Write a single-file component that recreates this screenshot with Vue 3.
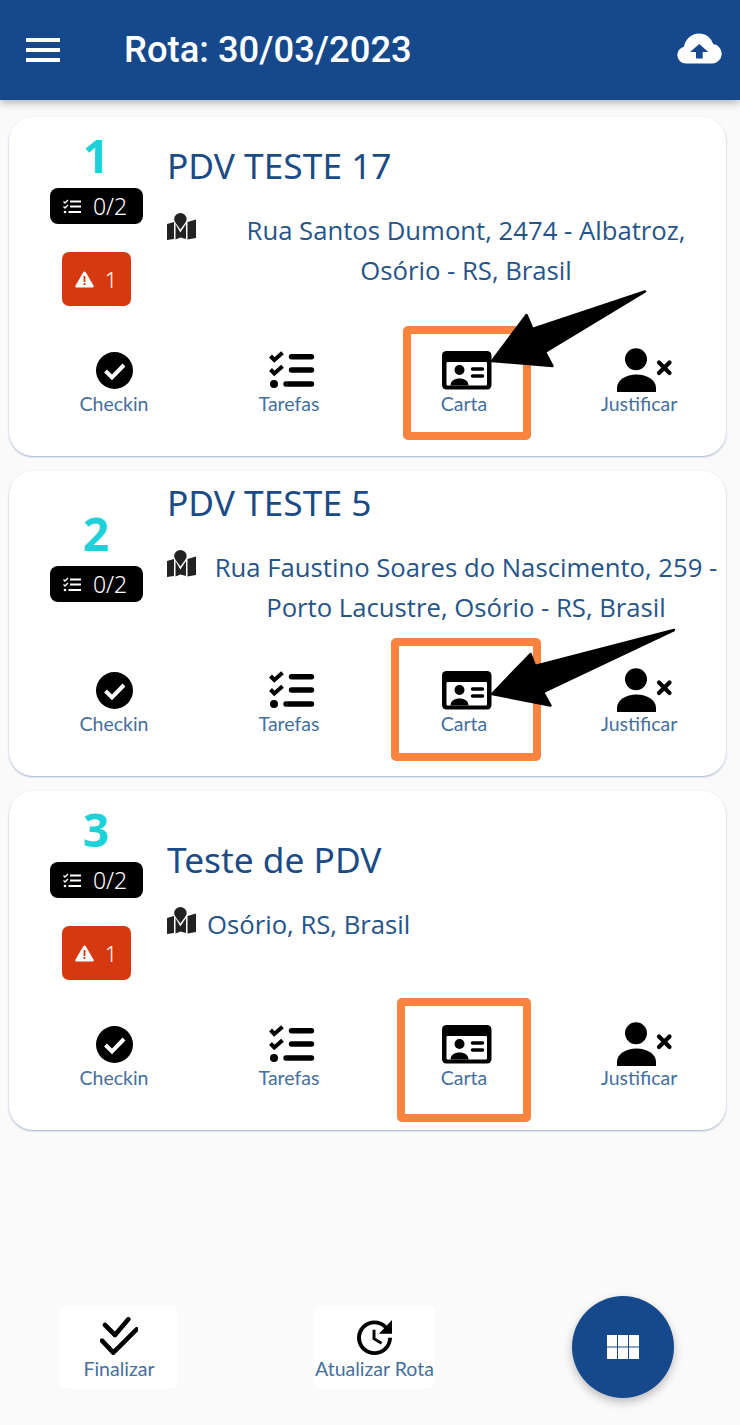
<script setup>
const actions = [
  { name: 'Checkin', cls: 'shift-0' },
  { name: 'Tarefas', cls: 'shift-tasks' },
  { name: 'Carta', cls: 'shift-card' },
  { name: 'Justificar', cls: 'shift-person' },
]
const stops = [
  { n: 1, title: 'PDV TESTE 17', address: 'Rua Santos Dumont, 2474 - Albatroz, Osório - RS, Brasil', alert: true },
  { n: 2, title: 'PDV TESTE 5', address: 'Rua Faustino Soares do Nascimento, 259 - Porto Lacustre, Osório - RS, Brasil', alert: false },
  { n: 3, title: 'Teste de PDV', address: 'Osório, RS, Brasil', alert: true },
]
</script>

<template>
  <div class="page">
    <header class="topbar">
      <svg class="menu" width="34" height="24" viewBox="0 0 34 24"><rect y="0" width="34" height="4" fill="#fff"/><rect y="10" width="34" height="4" fill="#fff"/><rect y="20" width="34" height="4" fill="#fff"/></svg>
      <h1 class="route">Rota: 30/03/2023</h1>
      <svg class="cloud" width="45" height="31" viewBox="0 0 45 31">
        <path fill="#fff" d="M9 30.500a8.500 8.500 0 0 1-2-16.800C8.200 6 14.500 0.500 22 0.500c6.500 0 12 4 14.200 10.500A9.800 9.800 0 0 1 35.500 30.500z"/>
        <path fill="#15498b" d="M22.300 11l9 8h-5.600v6.500H19V19h-6z"/>
      </svg>
    </header>

    <main class="list">
      <article v-for="s in stops" :key="s.n" class="card">
        <div class="top">
          <div class="side">
            <div class="num">{{ s.n }}</div>
            <div class="tasks">
              <svg width="18" height="15" viewBox="0 0 18 15" fill="none" stroke="#fff"><path d="M0.500 2.500l1.500 1.500 3-3M0.500 7.500l1.500 1.500 3-3" stroke-width="1.400"/><circle cx="2" cy="13" r="1.300" fill="#fff" stroke="none"/><path d="M7 2.500h11M7 7.500h11M5.500 13h12.500" stroke-width="1.800"/></svg>
              <span>0/2</span>
            </div>
            <div v-if="s.alert" class="alert">
              <svg width="19" height="17" viewBox="0 0 19 17"><path fill="#fff" d="M9.500 0.500a1.300 1.300 0 0 1 1.100.6l8 13.600a1.300 1.300 0 0 1-1.100 1.900h-16a1.300 1.300 0 0 1-1.100-1.900l8-13.600a1.300 1.300 0 0 1 1.100-.6z"/><rect x="8.600" y="5" width="1.800" height="6" fill="#d6380f"/><rect x="8.600" y="12" width="1.800" height="2" fill="#d6380f"/></svg>
              <span>1</span>
            </div>
          </div>
          <div class="main">
            <h2 class="title">{{ s.title }}</h2>
            <div class="place">
              <svg class="map" width="30" height="27" viewBox="0 0 30 27" fill="#222"><path d="M0 11l7-2v17l-7 1zM20.500 9l8.500-2.500V25l-8.500 1.500zM8.500 11l4.800 8.500L19 11v15l-5.500-1.500-5 2z"/><path d="M13.400 0a6.200 6.200 0 0 1 6.200 6.200c0 3-3.700 6.300-6.200 10.300-2.500-4-6.200-7.300-6.200-10.300A6.200 6.200 0 0 1 13.400 0z"/></svg>
              <p class="address">{{ s.address }}</p>
            </div>
          </div>
        </div>
        <div class="actions">
          <div v-for="a in actions" :key="a.name" class="action">
            <div class="action-icon" :class="a.cls">
              <svg v-if="a.name === 'Checkin'" width="37" height="37" viewBox="0 0 37 37"><circle cx="18.500" cy="18.500" r="18.500" fill="#000"/><path d="M9.500 19l6.500 6.500 12-12.500" fill="none" stroke="#fff" stroke-width="4"/></svg>
              <svg v-else-if="a.name === 'Tarefas'" width="46" height="38" viewBox="0 0 46 38" fill="none" stroke="#000"><path d="M1.500 5l3.800 4L13.500 1.800M1.500 18.500l3.800 4 8.200-7.200" stroke-width="4"/><circle cx="5" cy="33" r="4" fill="#000" stroke="none"/><path d="M22.500 5.800h20M22.500 19h20M17 33h25.500" stroke-width="5.400" stroke-linecap="round"/></svg>
              <svg v-else-if="a.name === 'Carta'" width="50" height="39" viewBox="0 0 50 39"><rect width="49.500" height="38.500" rx="4.500" fill="#000"/><rect x="4.500" y="11" width="40.500" height="23.500" rx="1" fill="#fff"/><circle cx="17.500" cy="19" r="5" fill="#000"/><path d="M8.500 34.500c0-4.500 4-7 9-7s9 2.500 9 7z" fill="#000"/><path d="M30.500 18h10M30.500 25h10" stroke="#000" stroke-width="3.500" stroke-linecap="round"/></svg>
              <svg v-else width="56" height="44" viewBox="0 0 56 44"><circle cx="19" cy="11.300" r="11" fill="#000"/><path d="M0 44v-4c0-8 9-13.500 19.500-13.500S39 32 39 40v4z" fill="#000"/><path d="M42 14.500l10.500 10.500M52.500 14.500L42 25" stroke="#000" stroke-width="4.200" stroke-linecap="round"/></svg>
            </div>
            <span class="label">{{ a.name }}</span>
          </div>
        </div>
      </article>
    </main>

    <footer class="footer">
      <button class="foot-btn finish">
        <svg width="38" height="38" viewBox="0 0 38 38" fill="none" stroke="#000" stroke-width="4.600" stroke-linecap="round" stroke-linejoin="round"><path d="M5 8l10 10L28.300 2.300M2 23.700l11.300 12 23.400-23.400"/></svg>
        <span class="label foot-label">Finalizar</span>
      </button>
      <button class="foot-btn update">
        <svg width="35" height="35" viewBox="3 3 18 18"><path fill="#000" d="M21 10.120h-6.780l2.740-2.820c-2.730-2.700-7.150-2.800-9.880-.1-2.730 2.710-2.730 7.080 0 9.790s7.150 2.710 9.880 0C18.320 15.650 19 14.080 19 12.100h2c0 1.980-.88 4.550-2.640 6.290-3.510 3.480-9.210 3.480-12.720 0-3.500-3.470-3.530-9.110-.02-12.580s9.140-3.470 12.650 0L21 3v7.120zM12.500 8v4.250l3.500 2.080-.72 1.210L11 13V8h1.500z"/></svg>
        <span class="label foot-label">Atualizar Rota</span>
      </button>
    </footer>

    <button class="fab">
      <svg width="32" height="25" viewBox="0 0 32 25" fill="#fff"><rect x="0" width="10" height="11.500"/><rect x="11" width="10" height="11.500"/><rect x="22" width="10" height="11.500"/><rect x="0" y="12.500" width="10" height="11.500"/><rect x="11" y="12.500" width="10" height="11.500"/><rect x="22" y="12.500" width="10" height="11.500"/></svg>
    </button>

    <svg class="markup" width="740" height="1425" viewBox="0 0 740 1425">
      <g fill="none" stroke="#f9833f" stroke-width="8">
        <rect x="407" y="330" width="120" height="106" rx="1"/>
        <rect x="395" y="642" width="142" height="115" rx="1"/>
        <rect x="401" y="1002" width="126" height="116" rx="1"/>
      </g>
      <g fill="#000" stroke="#000" stroke-width="2.500" stroke-linejoin="round">
        <polygon points="492,361 526.500,315 532.500,329 645,291.500 545,352 552.500,366"/>
        <polygon points="492,694 530.500,654 535,666 674,630 543,692 550.500,705.500"/>
      </g>
    </svg>
  </div>
</template>

<style scoped>
.page { position: relative; width: 740px; height: 1425px; display: flex; flex-direction: column; background: #fafafa; overflow: hidden; font-family: "Open Sans", sans-serif; }
.topbar { height: 100px; flex: none; display: flex; align-items: center; background: #15498b; box-shadow: 0 3px 8px rgba(0,0,0,.28); padding: 0 18px 0 26px; box-sizing: border-box; position: relative; }
.menu { flex: none; }
.route { margin: 0 0 0 64px; flex: 1; font: 500 36.400px/40px Roboto, sans-serif; color: #fff; }
.cloud { flex: none; margin-top: -4px; }
.list { display: flex; flex-direction: column; gap: 15px; padding: 17px 14px 0 9px; }
.card { background: #fff; border-radius: 24px; box-shadow: 0 1px 2px rgba(50,85,150,.45); padding-bottom: 40px; }
.top { display: flex; align-items: center; min-height: 202px; margin-bottom: 29px; }
.card:nth-child(2) .top { min-height: 168px; }
.side { flex: none; width: 140px; margin-left: 17px; padding-top: 2px; display: flex; flex-direction: column; align-items: center; }
.num { font: 700 46px/46px "Open Sans", sans-serif; color: #1dd1d8; height: 46px; margin-bottom: 10px; }
.tasks { width: 93px; height: 36px; background: #000; border-radius: 8px; color: #fff; display: flex; align-items: center; justify-content: center; gap: 12px; font: 300 23px/1 "Noto Sans", sans-serif; }
.tasks svg { margin-left: -2px; }
.alert { width: 69px; height: 54px; margin-top: 28px; background: #d6380f; border-radius: 7px; color: #fff; display: flex; align-items: center; justify-content: center; gap: 11px; font: 300 22px/1 "Noto Sans", sans-serif; }
.main { flex: 1; min-width: 0; margin-left: 1px; padding-right: 1px; }
.title { margin: 0; font: 400 35.300px/46px "Noto Sans", sans-serif; color: #1b4b86; position: relative; top: -3px; }
.place { display: flex; align-items: flex-start; gap: 10px; margin-top: 21px; }
.map { flex: none; margin-top: 1px; }
.address { margin: 0; flex: 0 1 auto; text-align: center; font: 400 25.700px/40px "Open Sans", sans-serif; color: #265489; position: relative; top: -1px; }
.actions { display: grid; grid-template-columns: repeat(4, 175px); margin-left: 17.500px; }
.action { display: flex; flex-direction: column; align-items: center; }
.action-icon { height: 44px; display: flex; align-items: center; justify-content: center; }
.shift-tasks { margin-left: 5px; }
.shift-card { margin-left: 6px; }
.shift-person { margin-left: 12px; }
.label { font: 400 19.500px/24px Lato, sans-serif; color: #44709f; white-space: nowrap; }
.footer { margin-top: auto; display: flex; gap: 136px; padding: 0 0 36px 60px; }
.foot-btn { height: 84px; background: #fff; border: 0; border-radius: 8px; display: flex; flex-direction: column; align-items: center; padding: 0; }
.finish { width: 118px; padding-top: 12px; }
.update { width: 121px; padding-top: 15px; }
.foot-label { margin-top: 2px; }
.fab { position: absolute; left: 572px; top: 1296px; width: 102px; height: 102px; border: 0; border-radius: 50%; background: #15498b; box-shadow: 0 4px 10px rgba(0,0,0,.25); display: flex; align-items: center; justify-content: center; padding: 0; }
.markup { position: absolute; left: 0; top: 0; pointer-events: none; }
</style>
